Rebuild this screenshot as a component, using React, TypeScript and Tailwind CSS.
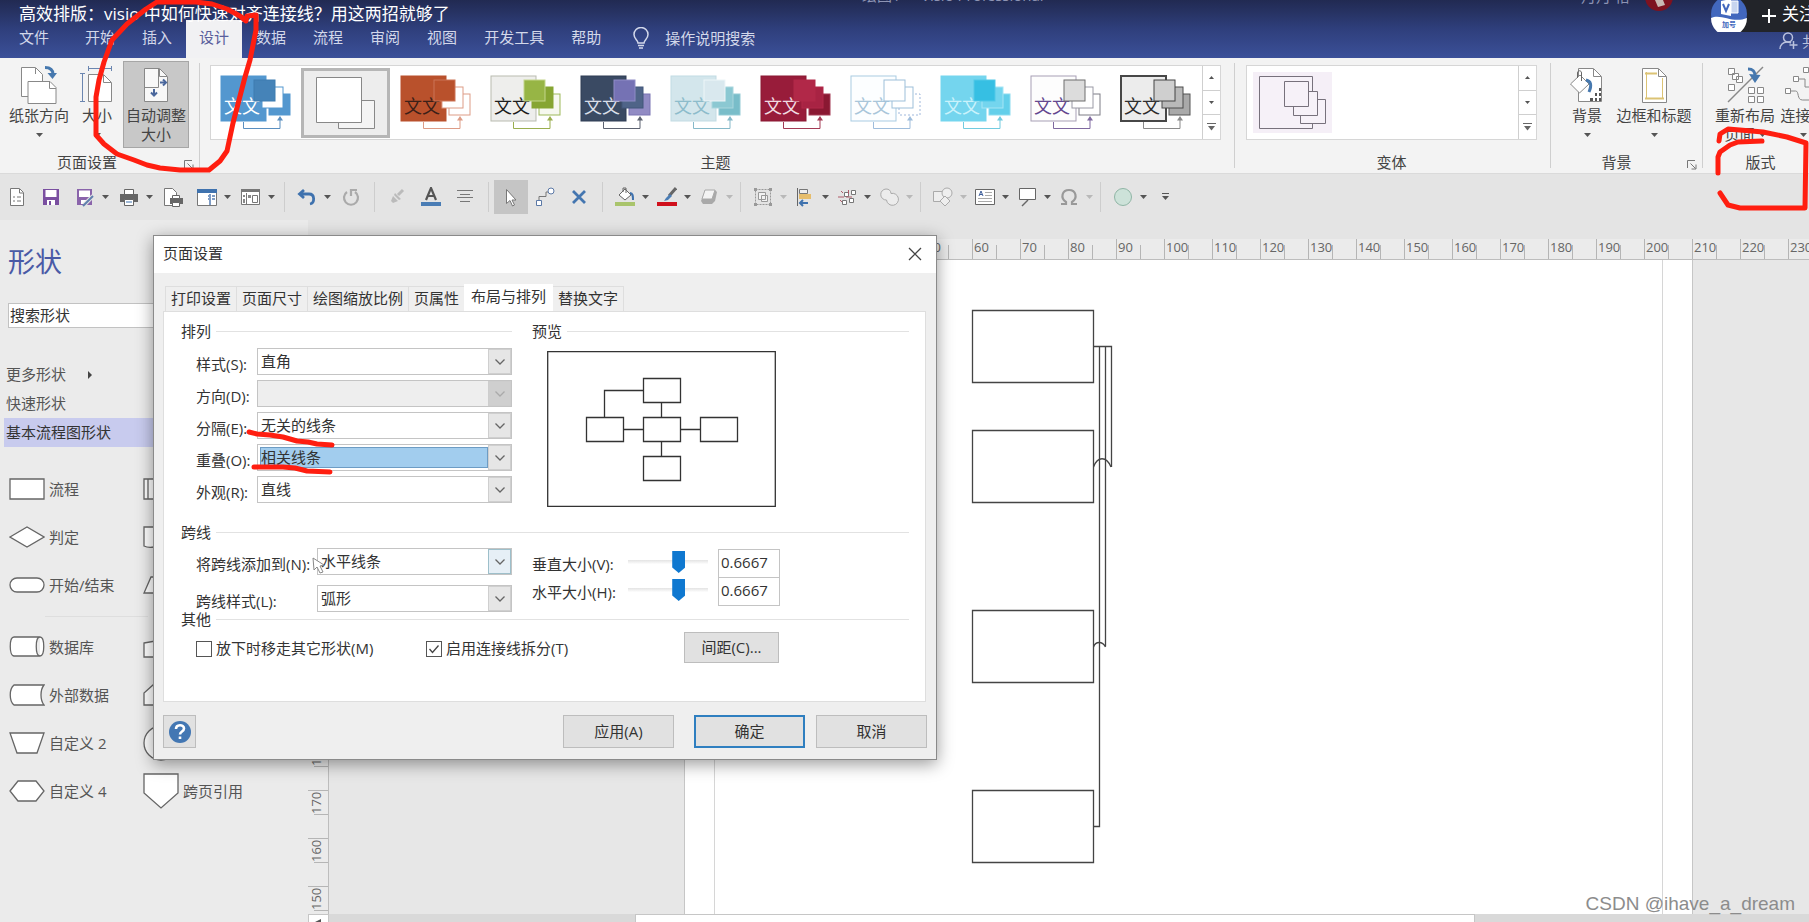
import React from 'react';
import clsx from 'clsx';

const TABS = ['文件', '开始', '插入', '设计', '数据', '流程', '审阅', '视图', '开发工具', '帮助'];

type Theme = {
  id: string;
  base: string;
  edge: string;
  text: string;
  fills: [string, string, string];
  strokes: [string, string, string];
  line: string;
};

const THEMES: Theme[] = [
  { id: 'blue', base: '#5397cf', edge: '#5397cf', text: '#ffffff', fills: ['#4583b8', '#ffffff', '#5397cf'], strokes: ['#3f7cb0', '#5397cf', '#5397cf'], line: '#5a8fc0' },
  { id: 'orange', base: '#b9512c', edge: '#b9512c', text: '#3c2018', fills: ['#b9512c', '#ffffff', '#ffffff'], strokes: ['#cc7456', '#dd9c86', '#dd9c86'], line: '#dd9c86' },
  { id: 'green', base: '#eeeeec', edge: '#b9bbb0', text: '#1d1d1d', fills: ['#97b545', '#86a532', '#f6f8ef'], strokes: ['#c3d68c', '#86a532', '#9db95a'], line: '#9aae4e' },
  { id: 'navy', base: '#3a4a63', edge: '#2f3d54', text: '#d9dee8', fills: ['#7572b4', '#4f6488', '#918bc4'], strokes: ['#8f8cc6', '#43577a', '#7a75b3'], line: '#5c6270' },
  { id: 'mist', base: '#d3e6ec', edge: '#c2dbe3', text: '#8dbccb', fills: ['#d9e8ee', '#8bc8d2', '#79bdc9'], strokes: ['#edf5f8', '#a9d6dd', '#95cbd5'], line: '#86b9c9' },
  { id: 'wine', base: '#981c3a', edge: '#8a1832', text: '#f1dbe1', fills: ['#b12848', '#a82343', '#8a1832'], strokes: ['#b12848', '#b12848', '#a33a54'], line: '#a33a54' },
  { id: 'outline', base: '#fcfeff', edge: '#a9cbe2', text: '#a9c6da', fills: ['#ffffff', '#ffffff', '#ffffff'], strokes: ['#9dbfd9', '#9dbfd9', '#9fb8dc'], line: '#9fbddc' },
  { id: 'cyan', base: '#74d5ee', edge: '#74d5ee', text: '#c9f2fb', fills: ['#36bfe3', '#74d5ee', '#63cfea'], strokes: ['#52c9e8', '#a5e5f5', '#8cdcf0'], line: '#72cbe0' },
  { id: 'violet', base: '#fdfdfd', edge: '#a79fb5', text: '#64478f', fills: ['#dcdcdc', '#ffffff', '#ffffff'], strokes: ['#6f6f6f', '#9a9aa5', '#7d7d85'], line: '#7f69a0' },
  { id: 'mono', base: '#ececec', edge: '#474747', text: '#2d2d2d', fills: ['#cfcfcf', '#b9b9b9', '#a9a9a9'], strokes: ['#444444', '#4d4d4d', '#555555'], line: '#8a8a8a' },
];

const ThemeThumb = ({ t }: { t: Theme }) => (
  <svg width="72" height="56" viewBox="-1 -1 72 56" fill="none">
    <rect x="0" y="0" width="45" height="45" fill={t.base} stroke={t.edge} strokeWidth={t.id === 'mono' ? 2 : 1} />
    <text x="3" y="37" fontSize="18" fill={t.text}>文文</text>
    <rect x="48" y="18" width="21" height="21" fill={t.fills[2]} stroke={t.strokes[2]} strokeDasharray={t.id === 'outline' ? '2 2' : undefined} />
    <rect x="41" y="11" width="21" height="21" fill={t.fills[1]} stroke={t.strokes[1]} />
    <rect x="33" y="4" width="21" height="21" fill={t.fills[0]} stroke={t.strokes[0]} />
    <path d="M22.500 46v6.500h36.500V42" stroke={t.line} />
    <path d="M56 44.500l3-4.500 3 4.500z" fill={t.line} />
  </svg>
);

const Caret = ({ light = false }: { light?: boolean }) => (
  <svg width="7" height="4" viewBox="0 0 7 4"><path d="M0 0h7L3.500 4z" fill={light ? '#b9b9b9' : '#555'} /></svg>
);

const Launcher = () => (
  <svg width="10" height="10" viewBox="0 0 10 10" fill="none" stroke="#777"><path d="M.5 8V.5H8M3.500 3.500l5 5M9 4.500V9H4.500" /></svg>
);

type BigProps = { label: string; icon: React.ReactNode; className?: string; second?: string; caret?: boolean };

const BigButton = ({ label, icon, className, second, caret }: BigProps) => (
  <button className={clsx('flex h-[87px] shrink-0 flex-col items-center border pt-[2px] text-[15px] leading-[19px] text-[#444]', className)}>
    <span className="flex h-[42px] items-center justify-center">{icon}</span>
    <span className="whitespace-nowrap">{label}</span>
    <span className="flex h-[19px] items-center gap-1">
      {second}
      {caret && <Caret />}
    </span>
  </button>
);

const Group = ({ title, className, launcher, children }: { title: string; className?: string; launcher?: boolean; children: React.ReactNode }) => (
  <section className={clsx('flex flex-col pt-[3px]', className)}>
    <div className="flex h-[87px]">{children}</div>
    <div className="relative mt-1 flex h-5 items-center justify-center text-[15px] text-[#444]">
      <span className={clsx(launcher && 'pr-7')}>{title}</span>
      {launcher && <button aria-label={title + '选项'} className="absolute right-[5px] top-2"><Launcher /></button>}
    </div>
  </section>
);

const Divider = () => <div className="mb-[5px] mt-[5px] w-px bg-[#cfcfcf]" />;

const GalleryScroll = () => (
  <div className="flex w-[18px] shrink-0 flex-col divide-y divide-[#cfcfcf] border-l border-[#cfcfcf]">
    <button aria-label="上一行" className="flex flex-1 items-center justify-center">
      <svg width="5" height="3" viewBox="0 0 5 3"><path d="M0 3h5L2.500 0z" fill="#555" /></svg>
    </button>
    <button aria-label="下一行" className="flex flex-1 items-center justify-center">
      <svg width="5" height="3" viewBox="0 0 5 3"><path d="M0 0h5L2.500 3z" fill="#555" /></svg>
    </button>
    <button aria-label="其他" className="flex flex-1 items-center justify-center">
      <svg width="9" height="8" viewBox="0 0 9 8"><path d="M0 .5h9" stroke="#666" /><path d="M1 3h7L4.500 7.500z" fill="#666" /></svg>
    </button>
  </div>
);

const page = { fill: '#fff', stroke: '#888' };

const OrientationIcon = () => (
  <svg width="38" height="40" viewBox="0 0 38 40" fill="none">
    <path d="M1.500 2.500h14l7 7v22h-21z" {...page} />
    <path d="M8 16.500h22l6 6v16H8z" {...page} />
    <path d="M29.500 17v6.500H36M15.500 3v6" stroke="#888" />
    <path d="M25 2.500c5 0 8 2.500 8 7" stroke="#4678ae" strokeWidth="3" />
    <path d="M27.500 8h9.500l-4.500 6z" fill="#4678ae" />
  </svg>
);

const SizeIcon = () => (
  <svg width="34" height="38" viewBox="0 0 34 38" fill="none">
    <path d="M8.500 8.500h15l8 8v19h-23z" {...page} />
    <path d="M23.500 9v7.500H31" stroke="#888" />
    <path d="M8 2.500h24M8.500 0v5M31.500 0v5M2.500 7v29M0 7.500h5M0 35.500h5" stroke="#6b86b0" />
  </svg>
);

const AutoSizeIcon = () => (
  <svg width="26" height="36" viewBox="0 0 26 36" fill="none">
    <path d="M1.500 1.500h15l8 8v25h-23z" fill="#f8f8f8" stroke="#888" />
    <path d="M16.500 2v7.500H24M1.500 20.500h14V2" stroke="#888" />
    <path d="M17 15.500h5M11 22v6" stroke="#4a679c" strokeWidth="2" />
    <path d="M20 12.500l3 3-3 3M8 25.500l3 3 3-3" stroke="#4a679c" strokeWidth="2" />
  </svg>
);

const BackgroundIcon = () => (
  <svg width="36" height="38" viewBox="0 0 36 38" fill="none">
    <path d="M9.500 2.500h15l8 8v25h-23z" {...page} />
    <path d="M24.500 3v7.500H32" stroke="#888" />
    <path d="M21 32h3v3h-3zM26 27h2v3h-2zM26 32h2v3h-2zM30 22h2v3h-2zM30 27h2v3h-2zM30 32h2v3h-2z" fill="#555" />
    <path d="M11 9l9 9-9.500 9L1.500 18z" {...page} />
    <path d="M8.500 12V7c0-3 4-3 4 0v8" stroke="#666" />
    <path d="M17 14c5 1 6 5 3 12" stroke="#4678ae" strokeWidth="3" />
  </svg>
);

const BorderIcon = () => (
  <svg width="27" height="37" viewBox="0 0 27 37" fill="none">
    <path d="M1.500 1.500h16l8 8v26h-24z" {...page} />
    <path d="M17.500 2v7.500H25" stroke="#888" />
    <path d="M5.500 5v27M21.500 11v21" stroke="#dcc374" />
    <path d="M4 6.500h12M4 31.500h19" stroke="#dcc374" strokeWidth="2" />
  </svg>
);

const RelayoutIcon = () => (
  <svg width="38" height="38" viewBox="0 0 38 38" fill="none" stroke="#888">
    <path d="M2.500 2.500h6v6h-6zM6.500 7.500h6v6h-6zM10.500 10.500h6v6h-6zM2.500 18.500h6v6h-6z" fill="#fff" />
    <path d="M22.500 21.500h6v6h-6zM31.500 21.500h6v6h-6zM22.500 30.500h6v6h-6zM31.500 30.500h6v6h-6z" fill="#fff" />
    <path d="M2 36L37 1" strokeWidth="1.500" />
    <path d="M22 3c5 0 7 2 7 7" stroke="#4678ae" strokeWidth="3" />
    <path d="M23 8l11.500 1-5.500 8z" fill="#4678ae" stroke="none" />
  </svg>
);

const ConnectorsIcon = () => (
  <svg width="38" height="38" viewBox="0 0 38 38" fill="none" stroke="#888">
    <path d="M9.500 10.500h5v5h-5zM19.500 1.500h5v5h-5zM1.500 22.500h5v5h-5zM27.500 18.500h6v6h-6zM27.500 30.500h6v6h-6z" fill="#fff" />
    <path d="M14.500 13H21v8h6M6.500 25h5c4 0 1 9 7 9h9M24.500 4H36" />
  </svg>
);

const QIcon = ({ children }: { children: React.ReactNode }) => (
  <svg width="20" height="20" viewBox="0 0 20 20" fill="none">{children}</svg>
);

type Tool = { name: string; icon: React.ReactNode; split?: boolean; off?: boolean; active?: boolean };

const TOOL_GROUPS: Tool[][] = [
  [
    { name: '新建', icon: <QIcon><path d="M3.500 1.500h9l4 4v13h-13z" fill="#fff" stroke="#777" /><path d="M12.500 2v4H16M6 10h2M10 10h4M6 14h2M10 14h4" stroke="#777" /></QIcon> },
    { name: '保存', icon: <QIcon><path d="M2 2h16v16H2z" fill="#7a4fa0" /><path d="M4.500 3h11v7h-11zM6 13h8v5H6z" fill="#fff" /><path d="M8 14h2v4H8z" fill="#7a4fa0" /></QIcon> },
    { name: '另存为', split: true, icon: <QIcon><path d="M2 2h15v16H2z" fill="#8a64ab" /><path d="M4 3.500h11v6.500H4zM6 13h7v4H6z" fill="#fff" /><path d="M18 9l-9 9" stroke="#e4e4e4" strokeWidth="4" /><path d="M18 9l-8 8-2 2" stroke="#5f7fae" strokeWidth="2" /></QIcon> },
    { name: '打印', split: true, icon: <QIcon><path d="M5.500 2.500h9v5h-9z" fill="#fff" stroke="#666" /><path d="M1 7h18v8H1z" fill="#666" /><path d="M5.500 12.500h9v6h-9z" fill="#fff" stroke="#666" /><path d="M7 15h6" stroke="#3f72ae" /></QIcon> },
    { name: '打印预览', icon: <QIcon><path d="M1.500 1.500h8l4 4v13h-12z" fill="#fff" stroke="#777" /><path d="M7 11h13v6H7z" fill="#666" /><path d="M9.500 8.500h7v3h-7zM9.500 15.500h7v4h-7z" fill="#fff" stroke="#666" /></QIcon> },
    { name: '形状窗口', split: true, icon: <QIcon><path d="M.5 2.500h19v16H.5z" fill="#fff" stroke="#777" /><path d="M0 2h20v4H0z" fill="#3f72ae" /><path d="M13 7v11M15 9h3M15 12h3M11 9h1M11 12h1" stroke="#7e9cc5" strokeWidth="2" /></QIcon> },
    { name: '视图窗口', split: true, icon: <QIcon><path d="M.5 2.500h18v15H.5z" fill="#fff" stroke="#777" /><path d="M0 2h19v3H0z" fill="#777" /><path d="M5.500 6v12M11.500 8.500h5v7h-5z" stroke="#777" /><path d="M2 8h2v2H2zM2 12h2v4H2zM7 8h3v3H7z" fill="#888" /></QIcon> },
  ],
  [
    { name: '撤消', split: true, icon: <QIcon><path d="M7 3L2.500 7 7 11M3 7h9c6 0 6 9 1 10" stroke="#3f72ae" strokeWidth="2.800" /></QIcon> },
    { name: '重复', off: true, icon: <QIcon><path d="M6 5a7 7 0 1 0 8 0M10 9V3h6" stroke="#aaa" strokeWidth="2.200" /></QIcon> },
  ],
  [
    { name: '格式刷', off: true, icon: <QIcon><path d="M16 3l-5 5" stroke="#bbb" strokeWidth="3" /><path d="M8 6l6 6-2 1-5-5zM6 9l5 5-5 2-2-2z" fill="#bbb" /></QIcon> },
    { name: '字体颜色', icon: <QIcon><path d="M5 13L10 1l5 12M7 9h6" stroke="#555" strokeWidth="2.200" /><path d="M0 15h20v4H0z" fill="#4a7db5" /></QIcon> },
    { name: '居中', icon: <QIcon><path d="M2 3.500h16M5 7.500h10M2 10.500h16M5 14.500h10" stroke="#777" /></QIcon> },
  ],
  [
    { name: '指针工具', active: true, icon: <QIcon><path d="M5.500 2.500v14l3.500-3 2.500 5.500 2-1-2.500-5H15z" fill="#fff" stroke="#777" /></QIcon> },
    { name: '连接线', icon: <QIcon><path d="M1.500 13.500h5v5h-5z" fill="#fff" stroke="#5b78a6" /><circle cx="16" cy="4" r="3" fill="#fff" stroke="#5b78a6" /><path d="M4 13V9.500h7V5h2" stroke="#777" /></QIcon> },
    { name: '连接点', icon: <QIcon><path d="M4 4l12 12M16 4L4 16" stroke="#4476b0" strokeWidth="2.800" /></QIcon> },
  ],
  [
    { name: '填充', split: true, icon: <QIcon><path d="M10 2l6 6-6 5-6-5z" fill="#fff" stroke="#666" /><path d="M8 5V1h3v5" stroke="#666" /><path d="M15 6c3 0 3 3 3 7" stroke="#3f72ae" strokeWidth="2" /><path d="M0 15h20v4H0z" fill="#a9c46c" /></QIcon> },
    { name: '线条', split: true, icon: <QIcon><path d="M19 1l-7 8" stroke="#666" strokeWidth="3" /><path d="M13 7l2 2-4 4-4 1 2-3z" fill="#4a7db5" /><path d="M0 15h20v4H0z" fill="#d0101c" /></QIcon> },
    { name: '效果', split: true, off: true, icon: <QIcon><path d="M6 3h10l2 2-2 9-3 3H4l-2-3z" fill="#a9a9a9" /><path d="M6 3h10l-3 9H3z" fill="#f3f3f3" stroke="#aaa" /></QIcon> },
  ],
  [
    { name: '组合', split: true, off: true, icon: <QIcon><path d="M2.500 2.500h15v15h-15z" stroke="#999" strokeDasharray="2 1" /><path d="M5.500 5.500h7v7h-7zM8.500 8.500h6v6h-6z" fill="#f3f3f3" stroke="#999" /><path d="M1 1h3v3H1zM16 1h3v3h-3zM1 16h3v3H1zM16 16h3v3h-3z" fill="#999" /></QIcon> },
    { name: '对齐', split: true, icon: <QIcon><path d="M2.500 1v18" stroke="#666" /><path d="M4.500 2.500h8v4h-8z" fill="#eee" stroke="#777" /><path d="M4 7h12v5H4z" fill="#e6bd6c" /><path d="M13 16H5M8 13l-3 3 3 3" stroke="#3f72ae" strokeWidth="2" /></QIcon> },
    { name: '位置', split: true, icon: <QIcon><path d="M7.500 5.500h4v4h-4zM14.500 3.500h4v4h-4zM5.500 13.500h4v4h-4zM12.500 11.500h4v4h-4z" fill="#fff" stroke="#777" /><path d="M1 10h6M9 10h6M11.500 7V3M4 4l2 2M3 13l2 2" stroke="#b05a68" /></QIcon> },
    { name: '合并', split: true, off: true, icon: <QIcon><path d="M7 2a5 5 0 0 1 5 4.500A6 6 0 1 1 7.500 13 5.500 5.500 0 1 1 7 2z" fill="#ececec" stroke="#aaa" /></QIcon> },
  ],
  [
    { name: '更改形状', split: true, off: true, icon: <QIcon><path d="M.5 4.500h10v10H.5z" fill="#eee" stroke="#aaa" /><circle cx="14" cy="6" r="5" fill="#eee" stroke="#aaa" /><path d="M12 9l5 5-5 5-5-5z" fill="#eee" stroke="#aaa" /></QIcon> },
    { name: '文本框', split: true, icon: <QIcon><path d="M.5 2.500h19v15H.5z" fill="#fff" stroke="#666" /><path d="M4 9l2-5 2 5M5 7.500h2" stroke="#3f5f9b" /><path d="M10 5.500h7M10 8.500h7M3 11.500h14M3 14.500h14" stroke="#aaa" /></QIcon> },
    { name: '标注', split: true, icon: <QIcon><path d="M2.500 1.500h16v11h-16z" fill="#fff" stroke="#666" /><path d="M11 13l-6 6" stroke="#666" strokeWidth="1.500" /></QIcon> },
    { name: '符号', split: true, off: true, icon: <QIcon><path d="M2 17h5v-2C1 11 3 3 10 3s9 8 3 12v2h5" stroke="#999" strokeWidth="2.200" /></QIcon> },
  ],
  [
    { name: '椭圆', split: true, icon: <QIcon><circle cx="10" cy="10" r="8.500" fill="#cde2d9" stroke="#8fb5a5" /></QIcon> },
    { name: '自定义快速访问工具栏', icon: <svg width="7" height="8" viewBox="0 0 7 8"><path d="M0 .5h7" stroke="#555" /><path d="M0 3h7L3.500 7z" fill="#555" /></svg> },
  ],
];

const QuickAccess = () => (
  <div className="flex h-[47px] shrink-0 items-center border-t border-[#dadada] bg-[#e4e4e4]">
    {TOOL_GROUPS.map((group, gi) => (
      <React.Fragment key={gi}>
        {gi > 0 && <div className="flex w-3 justify-center"><div className="h-[30px] w-px bg-[#cdcdcd]" /></div>}
        {group.map(tool => (
          <button
            key={tool.name}
            aria-label={tool.name}
            className={clsx(
              'flex h-[34px] items-center',
              tool.split ? (gi < 2 ? 'w-11 gap-[7px] pl-[7px]' : 'w-[42px] gap-[7px] pl-[7px]') : 'w-[34px] justify-center',
              tool.active && 'bg-[#c5c5c5]',
            )}
          >
            {tool.icon}
            {tool.split && <Caret light={tool.off} />}
          </button>
        ))}
      </React.Fragment>
    ))}
  </div>
);

const Header = () => (
  <header className="relative flex h-[58px] shrink-0 items-end overflow-hidden bg-linear-to-b from-[#212a52] via-[#2f3f7c] to-[#3b5099]">
    <nav className="flex items-end gap-[1px] pl-[6px] text-[15px] text-[#d3d8ea]">
      {TABS.map((tab, i) => (
        <button
          key={tab}
          className={clsx('h-[38px] px-[13px] pb-[3px]', i === 0 && 'mr-[9px]', tab === '设计' && 'bg-[#f1f1f3] text-[#5a5f9c]')}
        >
          {tab}
        </button>
      ))}
    </nav>
    <label className="ml-[19px] flex h-[38px] items-center gap-4 pb-[2px] text-[15px] text-[#d3d8ea]">
      <svg width="16" height="22" viewBox="0 0 16 22" fill="none" stroke="#d3d8ea" strokeWidth="1.500">
        <path d="M5 16c0-3-4-4-4-8.500a7 7 0 0 1 14 0C15 12 11 13 11 16zM5 18.500h6M6 21h4" />
      </svg>
      <input className="w-24 bg-transparent outline-none placeholder:text-[#d3d8ea]" placeholder="操作说明搜索" />
    </label>
    <h1 className="absolute left-[19px] top-[2px] whitespace-nowrap text-[17px] leading-6 text-white">高效排版：visio 中如何快速对齐连接线？用这两招就够了</h1>
    <span className="absolute -top-[15px] left-[862px] whitespace-pre text-[15px] leading-5 text-[#8d94b4]">绘图1  -  Visio Professional</span>
    <span className="absolute right-[179px] -top-[14px] text-[15px] leading-5 text-[#8d94b4]">月月 怡</span>
    <svg className="absolute right-[135px] top-0" width="30" height="12" viewBox="0 0 30 12"><circle cx="15" cy="-3" r="14" fill="#7d1220" /><path d="M11 0h8l2 5-7 2z" fill="#c9b9b4" /></svg>
    <div className="absolute right-0 top-0 flex h-8 w-20 items-center overflow-hidden bg-[#222429] pl-[33px] text-white">
      <svg width="14" height="14" viewBox="0 0 14 14" className="mr-[6px] shrink-0"><path d="M7 0v14M0 7h14" stroke="#fff" strokeWidth="2" /></svg>
      <button className="shrink-0 pb-1 text-[17px] leading-6">关注</button>
    </div>
    <svg className="absolute right-[62px] top-0" width="36" height="32" viewBox="0 4 36 32">
      <circle cx="18" cy="18" r="18" fill="#4267bd" />
      <path d="M0 22c10-5 22 6 36 0a18 18 0 0 1-36 0z" fill="#fff" />
      <path d="M10 5l10-2v17l-10-2z" fill="#fff" />
      <path d="M20 5h7v12h-7z" fill="#c8d5ef" stroke="#fff" />
      <path d="M12 8l3 7 3-7" stroke="#4267bd" strokeWidth="2" fill="none" />
      <text x="11" y="31" fontSize="7" fontWeight="700" fill="#4267bd">加号</text>
    </svg>
    <div className="absolute right-0 top-8 flex h-[18px] w-[30px] items-center gap-1 overflow-hidden text-[15px] text-[#b9c1dd]">
      <svg width="19" height="18" viewBox="0 0 19 18" fill="none" stroke="#b9c1dd" strokeWidth="1.500" className="shrink-0">
        <circle cx="9" cy="5.500" r="4.500" /><path d="M1 17c0-4 3-7 7-7 2 0 3 .5 4 1M14.500 9v8M10.500 13h8" />
      </svg>
      <span>共</span>
    </div>
  </header>
);

const Ribbon = () => (
  <div className="flex h-[115px] shrink-0 overflow-hidden bg-[#f3f3f3]">
    <Group title="页面设置" launcher className="w-[199px] shrink-0 pl-[3px]">
      <BigButton label="纸张方向" icon={<OrientationIcon />} caret className="w-[72px] border-transparent" />
      <BigButton label="大小" icon={<SizeIcon />} caret className="w-11 border-transparent" />
      <BigButton label="自动调整" second="大小" icon={<AutoSizeIcon />} className="ml-1 w-[66px] border-[#a6a6a6] bg-[#c8c8c8]" />
    </Group>
    <Divider />
    <Group title="主题" className="min-w-0 flex-1 pl-[10px] pr-[13px]">
      <div className="mt-1 flex h-[75px] flex-1 overflow-hidden border border-[#d6d6d6] bg-white">
        <div className="flex min-w-0 flex-1 overflow-hidden">
          {THEMES.map((t, i) => (
            <React.Fragment key={t.id}>
              <button aria-label={t.id} className="flex w-[90px] shrink-0 items-center justify-center"><ThemeThumb t={t} /></button>
              {i === 0 && (
                <button aria-label="无主题" className="flex w-[90px] shrink-0 items-center pr-[1px]">
                  <span className="flex h-[70px] w-full items-center justify-center border-[3px] border-[#b6b6b6] bg-[#ededed]">
                    <svg width="62" height="54" viewBox="0 0 62 54" fill="#fff" stroke="#888"><path d="M23.500 24.500h36v28h-36z" fill="#f4f4f4" /><path d="M1.500 1.500h45v45h-45z" /></svg>
                  </span>
                </button>
              )}
            </React.Fragment>
          ))}
        </div>
        <GalleryScroll />
      </div>
    </Group>
    <Divider />
    <Group title="变体" className="w-[315px] shrink-0 pl-[11px] pr-[13px]">
      <div className="mt-1 flex h-[75px] flex-1 border border-[#d6d6d6] bg-white">
        <div className="flex-1 pl-[6px] pt-[6px]">
          <button aria-label="变体 1" className="flex h-[61px] w-[79px] items-center justify-center bg-[#f5eff7]">
            <svg width="68" height="54" viewBox="0 0 68 54" fill="#f6f1f8" stroke="#77717c">
              <path d="M.5.5h53v52H.5z" /><path d="M41.500 23.500h25v24h-25z" /><path d="M34.500 15.500h24v24h-24z" /><path d="M25.500 5.500h24v25h-24z" />
            </svg>
          </button>
        </div>
        <GalleryScroll />
      </div>
    </Group>
    <Divider />
    <Group title="背景" launcher className="w-[151px] shrink-0 pl-2">
      <BigButton label="背景" icon={<BackgroundIcon />} caret className="w-14 border-transparent" />
      <BigButton label="边框和标题" icon={<BorderIcon />} caret className="w-[78px] border-transparent" />
    </Group>
    <Divider />
    <Group title="版式" className="w-[106px] shrink-0 overflow-hidden pl-[9px]">
      <BigButton label="重新布局" second="页面" icon={<RelayoutIcon />} caret className="w-[66px] border-transparent" />
      <BigButton label="连接线" icon={<ConnectorsIcon />} caret className="w-[50px] border-transparent" />
    </Group>
  </div>
);

// stencil glyphs, drawn on a 36 x 36 grid
const SHAPES: { left: string; label: string; right: string; rightLabel?: string }[] = [
  { left: 'M1 8h34v20H1z', label: '流程', right: 'M1 8h34v20H1zM5 8v20M31 8v20' },
  { left: 'M1 18L18 8l17 10-17 10z', label: '判定', right: 'M1 8h34v19c-10-4-16 5-24 1q-6 1-10-1z' },
  { left: 'M8 11h20a7 7 0 0 1 0 14H8a7 7 0 0 1 0-14z', label: '开始/结束', right: 'M8 10h27l-7 16H1z' },
  { left: 'M5 8h26c5 0 5 19 0 19H5c-5 0-5-19 0-19zM31 8c-5 0-5 19 0 19', label: '数据库', right: 'M1 14l34-6v20H1z' },
  { left: 'M5 8h30c-4 5-4 15 0 20H5c-5-4-5-16 0-20z', label: '外部数据', right: 'M1 28V16l9-8h16l9 8v12z' },
  { left: 'M1 8h34l-7 20H8z', label: '自定义 2', right: 'M18 1a17 17 0 1 1 0 34 17 17 0 1 1 0-34z' },
  { left: 'M1 18l8-10h18l8 10-8 10H9z', label: '自定义 4', right: 'M1 1h34v19L18 35 1 20z', rightLabel: '跨页引用' },
];

const Stencil = ({ d }: { d: string }) => (
  <svg width="36" height="36" viewBox="0 0 36 36" fill="#fff" stroke="#666" strokeWidth="1.300" className="shrink-0"><path d={d} /></svg>
);

const Sidebar = () => (
  <aside className="flex w-[308px] shrink-0 flex-col bg-[#ebebeb] text-[15px] text-[#555]">
    <h2 className="pl-2 pt-6 text-[27px] leading-9 text-[#4a5aa6]">形状</h2>
    <input aria-label="搜索形状" defaultValue="搜索形状" className="ml-2 mr-3 mt-[23px] h-[25px] border border-[#c2c2c2] bg-white px-[1px] pb-[2px] text-[#333]" />
    <div className="ml-1 mr-3 mt-8 flex flex-col leading-[29px]">
      <button className="flex items-center gap-[22px] pl-[2px]">
        更多形状
        <svg width="4" height="8" viewBox="0 0 4 8"><path d="M0 0l4 4-4 4z" fill="#444" /></svg>
      </button>
      <button className="pl-[2px] text-left">快速形状</button>
      <button className="bg-[#c8cbee] pl-[2px] text-left text-[#333]">基本流程图形状</button>
    </div>
    <div className="mt-[18px] pl-[9px]">
      {SHAPES.map((s, i) => (
        <React.Fragment key={s.label}>
          {i === 3 && <div className="ml-9 mr-40 h-[14px] pt-[7px]"><div className="h-px bg-[#dedede]" /></div>}
          <div className="grid h-12 grid-cols-[134px_1fr] items-center">
            <div className="flex items-center gap-1 whitespace-nowrap"><Stencil d={s.left} />{s.label}</div>
            <div className="flex items-center gap-1"><Stencil d={s.right} />{s.rightLabel}</div>
          </div>
        </React.Fragment>
      ))}
    </div>
  </aside>
);

const H_TICKS = Array.from({ length: 19 }, (_, i) => 50 + i * 10);
const V_TICKS = [180, 170, 160, 150];

const Workspace = () => (
  <div className="flex min-w-0 flex-1 flex-col">
    <div className="h-[19px] shrink-0 bg-[#e4e4e4]" />
    <div className="flex h-[21px] shrink-0 overflow-hidden border-b border-[#bdbdbd] bg-[#ebebeb] pl-[616px] text-[13px] leading-[17px] text-[#666]">
      {H_TICKS.map(n => (
        <div key={n} className="flex w-12 shrink-0">
          <span className="w-6 border-l border-[#b5b5b5] pl-[1px]">{n}</span>
          <span className="mt-[6px] flex-1 border-l border-[#b5b5b5]" />
        </div>
      ))}
    </div>
    <div className="flex min-h-0 flex-1">
      <div className="flex w-[21px] shrink-0 flex-col overflow-hidden border-r border-[#bdbdbd] bg-[#ebebeb] pt-[482px] text-[13px] text-[#666]">
        {V_TICKS.map(n => (
          <div key={n} className="flex h-12 shrink-0 flex-col">
            <span className="h-6 w-full rotate-180 border-b border-[#b5b5b5] pb-[2px] text-right leading-4 [writing-mode:vertical-rl]">{n}</span>
            <span className="ml-[6px] flex-1 border-t border-[#b5b5b5]" />
          </div>
        ))}
      </div>
      <div className="flex min-w-0 flex-1 overflow-hidden bg-[#e7e7e7] pl-[355px]">
        <div className="flex w-[1009px] shrink-0 border-x border-[#c6c6c6] bg-white px-[29px]">
          <div className="flex-1 overflow-hidden border-x border-[#d6d6d6]">
            <svg width="940" height="654" viewBox="715 260 940 654" fill="none" stroke="#444" strokeWidth="1.300">
              <path d="M972.500 310.500h121v72h-121zM972.500 430.500h121v72h-121zM972.500 610.500h121v72h-121zM972.500 790.500h121v72h-121z" />
              <path d="M1093.500 346.500h18v120.500M1105.500 346.500v300M1099.500 346.500v480h-6" />
              <path d="M1093.500 467c4-11 13-11 17.500 0M1093.500 647c2-6 9-6 12 0" />
            </svg>
          </div>
        </div>
      </div>
    </div>
    <div className="flex h-2 shrink-0 bg-[#d9d9d9]">
      <button aria-label="滚动" className="w-[21px] border border-b-0 border-[#c6c6c6] bg-white">
        <svg width="19" height="7" viewBox="0 0 19 7"><path d="M6 7l6-3v3z" fill="#555" /></svg>
      </button>
      <div className="ml-[306px] w-[840px] border border-b-0 border-[#c6c6c6] bg-white" />
    </div>
  </div>
);

const GroupTitle = ({ children, className }: { children: React.ReactNode; className?: string }) => (
  <div className={clsx('flex items-center gap-[5px] leading-[14px]', className)}>
    <span>{children}</span>
    <span className="h-px flex-1 bg-[#e2e2e2]" />
  </div>
);

type PickProps = { id: string; label: string; value: string; labelClass: string; disabled?: boolean; focused?: boolean; hot?: boolean };

const Pick = ({ id, label, value, labelClass, disabled, focused, hot }: PickProps) => (
  <div className="flex h-[27px] items-end pl-[15px]">
    <label htmlFor={id} className={clsx('shrink-0 whitespace-nowrap leading-[21px]', labelClass)}>{label}</label>
    <div className={clsx('relative flex h-full min-w-0 flex-1 border border-[#c4c4c4]', disabled ? 'bg-[#eeeeee]' : 'bg-white', focused && 'py-[2px] pl-[2px]')}>
      <select
        id={id}
        disabled={disabled}
        defaultValue={value}
        className={clsx('mr-[23px] min-w-0 flex-1 appearance-none outline-none', focused ? 'border border-[#6d9cc4] bg-[#a2cdee] leading-[17px]' : 'pl-[3px]')}
      >
        <option>{value}</option>
      </select>
      <span
        className={clsx(
          'pointer-events-none absolute inset-y-0 right-0 flex w-[23px] items-center justify-center border',
          hot ? 'border-[#9dbfca] bg-[#e6eff6]' : disabled ? 'border-[#cdcdcd] bg-[#cfcfcf]' : 'border-[#cfcfcf] bg-[#e6e6e6]',
        )}
      >
        <svg width="10" height="6" viewBox="0 0 10 6" fill="none"><path d="M.5.5L5 5 9.500.5" stroke={disabled ? '#aaa' : '#666'} strokeWidth="1.300" /></svg>
      </span>
    </div>
  </div>
);

const SizeRow = ({ id, label }: { id: string; label: string }) => (
  <div className="flex h-7 items-center">
    <label htmlFor={id} className="w-24 whitespace-nowrap pt-1">{label}</label>
    <input
      id={id}
      type="range"
      min={0}
      max={1}
      step="any"
      defaultValue={0.66}
      className="h-[22px] w-20 appearance-none bg-linear-to-b from-transparent from-40% via-[#e2e2e2] via-40% to-transparent to-60% [&::-webkit-slider-thumb]:h-[22px] [&::-webkit-slider-thumb]:w-[13px] [&::-webkit-slider-thumb]:appearance-none [&::-webkit-slider-thumb]:bg-[#0f78d0] [&::-webkit-slider-thumb]:[clip-path:polygon(0_0,100%_0,100%_75%,50%_100%,0_75%)]"
    />
    <input aria-label={label} defaultValue="0.6667" className="ml-[10px] mt-[2px] h-[29px] w-[62px] border border-[#c4c4c4] bg-white pb-[3px] pl-[2px]" />
  </div>
);

const DialogTabs = ['打印设置', '页面尺寸', '绘图缩放比例', '页属性', '布局与排列', '替换文字'];

const Check = ({ label, checked, className }: { label: string; checked?: boolean; className?: string }) => (
  <label className={clsx('flex shrink-0 items-center gap-1 whitespace-nowrap pt-[2px]', className)}>
    <span className="relative flex">
      <input type="checkbox" defaultChecked={checked} className="peer h-4 w-4 appearance-none border border-[#555] bg-white" />
      <svg width="16" height="16" viewBox="0 0 16 16" fill="none" className="pointer-events-none invisible absolute inset-0 peer-checked:visible"><path d="M3.500 8l3 3.500 6-7" stroke="#444" strokeWidth="1.300" /></svg>
    </span>
    {label}
  </label>
);

const dialogButton = 'h-[33px] w-[111px] border bg-[#e1e1e1]';

const PageSetupDialog = () => (
  <div role="dialog" aria-label="页面设置" className="absolute left-[153px] top-[235px] flex w-[784px] flex-col border border-[#8a8a8a] bg-[#efefef] text-[15px] text-[#333] shadow-[0_4px_16px_rgba(0,0,0,0.4)]">
    <div className="flex h-[37px] items-center justify-between bg-white pb-[2px] pl-[9px] pr-[14px]">
      <h2>页面设置</h2>
      <button aria-label="关闭">
        <svg width="14" height="14" viewBox="0 0 14 14"><path d="M1 1l12 12M13 1L1 13" stroke="#444" strokeWidth="1.300" /></svg>
      </button>
    </div>
    <div className="flex items-end pl-[11px] pt-[11px]" role="tablist">
      {DialogTabs.map((tab, i) => (
        <button
          key={tab}
          role="tab"
          aria-selected={i === 4}
          className={clsx(i === 4 ? 'h-[27px] bg-white px-[7px] pb-1 leading-5' : 'h-[25px] border-t border-[#dedede] px-[5px] pb-[1px] leading-[23px]', i < 3 && 'border-r', i === 0 && 'border-l', i === 5 && 'border-r')}
        >
          {tab}
        </button>
      ))}
    </div>
    <div className="ml-[9px] mr-[10px] border border-[#dedede] bg-white pb-[38px] pl-[17px] pr-4 pt-3">
      <div className="flex gap-5">
        <div className="w-[331px] shrink-0">
          <GroupTitle>排列</GroupTitle>
          <div className="mt-[10px] flex flex-col gap-[5px]">
            <Pick id="style" label="样式(S):" value="直角" labelClass="w-[61px]" />
            <Pick id="direction" label="方向(D):" value="" labelClass="w-[61px]" disabled />
            <Pick id="separate" label="分隔(E):" value="无关的线条" labelClass="w-[61px]" />
            <Pick id="overlap" label="重叠(O):" value="相关线条" labelClass="w-[61px]" focused />
            <Pick id="look" label="外观(R):" value="直线" labelClass="w-[61px]" />
          </div>
        </div>
        <div className="flex-1">
          <GroupTitle>预览</GroupTitle>
          <svg className="ml-[15px] mt-[13px]" width="229" height="156" viewBox="0 0 229 156" fill="none" stroke="#333" strokeWidth="1.300">
            <path d="M.7.7h227.600v154.600H.7z" />
            <path d="M96.500 27.500h37v24h-37zM96.500 66.500h37v24h-37zM96.500 105.500h37v24h-37zM39.500 66.500h37v24h-37zM153.500 66.500h37v24h-37z" />
            <path d="M114.500 51.500v15M114.500 90.500v15M76.500 78.500h20M133.500 78.500h20M57.500 66.500v-27h39" />
          </svg>
        </div>
      </div>
      <GroupTitle className="mt-[18px]">跨线</GroupTitle>
      <div className="mt-[9px] flex gap-5">
        <div className="flex w-[331px] shrink-0 flex-col gap-[10px]">
          <Pick id="jump-to" label="将跨线添加到(N):" value="水平线条" labelClass="w-[121px]" hot />
          <Pick id="jump-style" label="跨线样式(L):" value="弧形" labelClass="w-[121px]" />
        </div>
        <div>
          <SizeRow id="vertical" label="垂直大小(V):" />
          <SizeRow id="horizontal" label="水平大小(H):" />
        </div>
      </div>
      <GroupTitle>其他</GroupTitle>
      <div className="mt-[6px] flex items-center pl-[15px]">
        <Check label="放下时移走其它形状(M)" className="w-[230px]" />
        <Check label="启用连接线拆分(T)" checked className="w-[258px]" />
        <button className="h-[31px] w-[95px] border border-[#bdbdbd] bg-[#e1e1e1]">间距(C)...</button>
      </div>
    </div>
    <div className="flex items-center px-[9px] pb-[11px] pt-[13px]">
      <button aria-label="帮助" className="mr-auto flex h-[33px] w-[33px] items-center justify-center border border-[#bdbdbd] bg-[#e1e1e1]">
        <svg width="24" height="24" viewBox="0 0 24 24" fill="none">
          <circle cx="12" cy="12" r="11" fill="#4377b3" />
          <path d="M8 9c0-5 8-5 8-.5 0 3-4 3-4 6M12 16.500v2.500" stroke="#fff" strokeWidth="2.600" />
        </svg>
      </button>
      <button className={clsx(dialogButton, 'mr-5 border-[#bdbdbd]')}>应用(A)</button>
      <button className={clsx(dialogButton, 'mr-[11px] border-2 border-[#2f7fc0]')}>确定</button>
      <button className={clsx(dialogButton, 'border-[#bdbdbd]')}>取消</button>
    </div>
  </div>
);

const Markup = () => (
  <svg className="pointer-events-none absolute left-0 top-0" width="1809" height="922" viewBox="0 0 1809 922" fill="none">
    <path d="M313 558l11 7-4 1 3 6-3 1-3-6-3 3z" fill="#fff" stroke="#888" />
    <g stroke="#ff1e10" strokeWidth="5" strokeLinecap="round" strokeLinejoin="round">
      <path d="M246 21L240 16 227 9 212 4 196 2H157L146 9 127 24 112 40 104 62 99 80 96 97V135L104 144 117 154 134 160 147 165 160 168 180 170H209L220 161 227 151 233 123 245 77 250 60 253 45 256 30V15L247 16z" />
      <path d="M1719 141L1720 134 1728 129 1763 132 1787 137 1806 143 1805 208H1740L1728 205 1720 193" />
      <path d="M1762 141L1738 142 1730 145 1720 152 1718 157V173" />
      <path d="M249 432L257 434 270 435 283 437 297 441 308 442 317 444 332 445" />
      <path d="M254 467H283L295 468 307 471 330 472" />
    </g>
  </svg>
);

const App: React.FC = () => {
  return (
    <div className={'relative flex h-screen flex-col overflow-hidden bg-[#e4e4e4] font-["Open_Sans","Noto_Sans_CJK_SC",sans-serif]'}>
      <Header />
      <Ribbon />
      <QuickAccess />
      <main className="flex min-h-0 flex-1">
        <Sidebar />
        <Workspace />
      </main>
      <PageSetupDialog />
      <Markup />
      <span className={'absolute bottom-[6px] right-[14px] font-["Liberation_Sans",sans-serif] text-[19px] leading-6 text-[#8c8c8c]'}>CSDN @ihave_a_dream</span>
    </div>
  );
};

export default App;
